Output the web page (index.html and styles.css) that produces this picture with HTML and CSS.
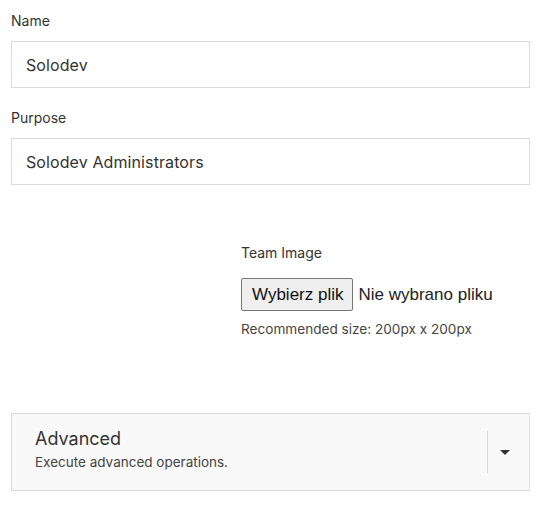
FILE: index.html
```html
<!DOCTYPE html>
<html>
<head>
<meta charset="utf-8">
<link rel="stylesheet" href="styles.css">
</head>
<body>
<form class="form">
  <div class="field">
    <label class="label">Name</label>
    <div class="input">Solodev</div>
  </div>
  <div class="field">
    <label class="label">Purpose</label>
    <div class="input">Solodev Administrators</div>
  </div>
  <div class="image-row">
    <div class="preview"></div>
    <div class="image-field">
      <label class="label">Team Image</label>
      <div class="file">
        <span class="file-btn">Wybierz plik</span>
        <span class="file-name">Nie wybrano pliku</span>
      </div>
      <div class="hint">Recommended size: 200px x 200px</div>
    </div>
  </div>
  <div class="advanced">
    <div class="adv-text">
      <div class="adv-title">Advanced</div>
      <div class="adv-desc">Execute advanced operations.</div>
    </div>
    <div class="adv-toggle">
      <span class="sep"></span>
      <span class="caret"></span>
    </div>
  </div>
</form>
</body>
</html>
```
FILE: styles.css
```css
* { box-sizing: border-box; }
html, body { margin: 0; background: #fff; }
body {
  font-family: Inter, "Noto Sans", sans-serif;
  color: #333;
}
.form {
  width: 519px;
  margin-left: 11px;
  padding-top: 13px;
}
.field { margin-bottom: 22px; }
.label {
  display: block;
  font-size: 14px;
  line-height: 16px;
  color: #333;
  margin-bottom: 12px;
}
.input {
  height: 47px;
  border: 1px solid #dcdcdc;
  padding: 0 14px;
  display: flex;
  align-items: center;
  font-size: 16px;
  letter-spacing: 0.1px;
  color: #333;
}
.image-row {
  display: grid;
  grid-template-columns: 230px 1fr;
  margin-top: 48px;
}
.image-field { padding-top: 12px; }
.image-field .label { margin-bottom: 17px; }
.file {
  display: flex;
  align-items: center;
  gap: 5px;
  font-family: "Liberation Sans", Arial, sans-serif;
  font-size: 17px;
  color: #222;
}
.file-btn {
  display: inline-flex;
  align-items: center;
  height: 33px;
  padding: 0 9px 0 10px;
  background: #efefef;
  border: 1px solid #767676;
  border-radius: 2px;
  color: #111;
}
.hint {
  margin-top: 10px;
  font-size: 13.6px;
  color: #444;
}
.advanced {
  margin-top: 76px;
  height: 78px;
  border: 1px solid #dcdcdc;
  background: #f9f9f9;
  display: flex;
  align-items: center;
  padding-left: 23px;
}
.adv-text { flex: 1; padding-bottom: 5px; }
.adv-title {
  font-size: 18px;
  line-height: 22px;
  color: #333;
}
.adv-desc {
  font-size: 13.5px;
  line-height: 18px;
  margin-top: 3px;
  color: #444;
}
.adv-toggle {
  display: flex;
  align-items: center;
  height: 42px;
  width: 42px;
}
.sep {
  width: 1px;
  height: 42px;
  background: #d8d8d8;
}
.caret {
  margin-left: 12px;
  width: 0;
  height: 0;
  border-left: 5px solid transparent;
  border-right: 5px solid transparent;
  border-top: 5px solid #333;
}
```
